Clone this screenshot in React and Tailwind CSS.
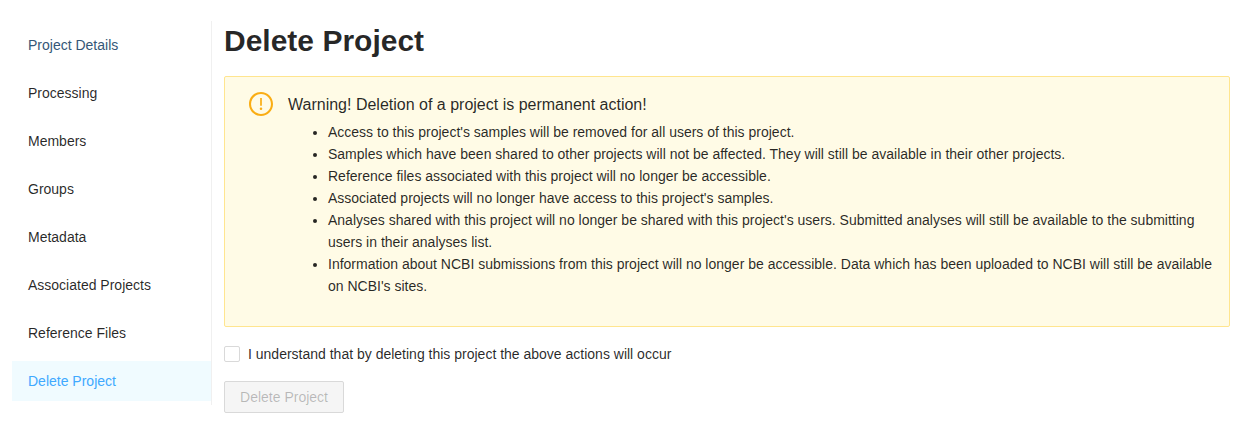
const items = [
  "Project Details",
  "Processing",
  "Members",
  "Groups",
  "Metadata",
  "Associated Projects",
  "Reference Files",
  "Delete Project",
];

const warnings = [
  "Access to this project's samples will be removed for all users of this project.",
  "Samples which have been shared to other projects will not be affected. They will still be available in their other projects.",
  "Reference files associated with this project will no longer be accessible.",
  "Associated projects will no longer have access to this project's samples.",
  "Analyses shared with this project will no longer be shared with this project's users. Submitted analyses will still be available to the submitting users in their analyses list.",
  "Information about NCBI submissions from this project will no longer be accessible. Data which has been uploaded to NCBI will still be available on NCBI's sites.",
];

function itemClass(item) {
  if (item === "Delete Project") return "bg-[#f0fbff] text-[#40a9ff]";
  if (item === "Project Details") return "text-[#355777]";
  return "text-black/85";
}

function ExclamationCircle() {
  return (
    <svg className="mt-[3px] size-6 shrink-0" viewBox="64 64 896 896" fill="#faad14" aria-hidden="true">
      <path d="M512 64C264.6 64 64 264.6 64 512s200.6 448 448 448 448-200.6 448-448S759.4 64 512 64zm0 820c-205.4 0-372-166.6-372-372s166.6-372 372-372 372 166.6 372 372-166.6 372-372 372z" />
      <path d="M464 688a48 48 0 1096 0 48 48 0 10-96 0zm24-112h48c4.400 0 8-3.600 8-8V296c0-4.400-3.600-8-8-8h-48c-4.400 0-8 3.600-8 8v272c0 4.400 3.600 8 8 8z" />
    </svg>
  );
}

export default function App() {
  return (
    <div className="flex h-[429px] bg-white font-['Liberation_Sans',sans-serif] text-sm leading-[22px] text-black/85">
      <nav className="mt-[21px] ml-3 h-[384px] w-[200px] shrink-0 border-r border-[#f0f0f0]">
        <ul className="flex flex-col gap-2 pt-1">
          {items.map((item) => (
            <li key={item} className={`h-10 pl-4 leading-10 ${itemClass(item)}`}>
              {item}
            </li>
          ))}
        </ul>
      </nav>
      <main className="ml-3 w-[1006px] shrink-0 pt-[22px]">
        <h1 className="text-[30px] leading-[38px] font-bold">Delete Project</h1>
        <section className="mt-4 flex h-[251px] gap-[15px] rounded-[2px] border border-[#ffe58f] bg-[#fffbe6] pt-3 pr-[15px] pl-6">
          <ExclamationCircle />
          <div className="pt-1">
            <h2 className="text-base leading-6">Warning! Deletion of a project is permanent action!</h2>
            <ul className="mt-1 list-disc pl-10">
              {warnings.map((text) => (
                <li key={text}>{text}</li>
              ))}
            </ul>
          </div>
        </section>
        <label className="mt-4 flex items-center gap-2">
          <input type="checkbox" className="size-4 appearance-none rounded-[2px] border border-[#d9d9d9] bg-white" />
          I understand that by deleting this project the above actions will occur
        </label>
        <button disabled className="mt-4 h-8 w-[120px] rounded-[2px] border border-[#d9d9d9] bg-[#f5f5f5] text-black/25">
          Delete Project
        </button>
      </main>
    </div>
  );
}
